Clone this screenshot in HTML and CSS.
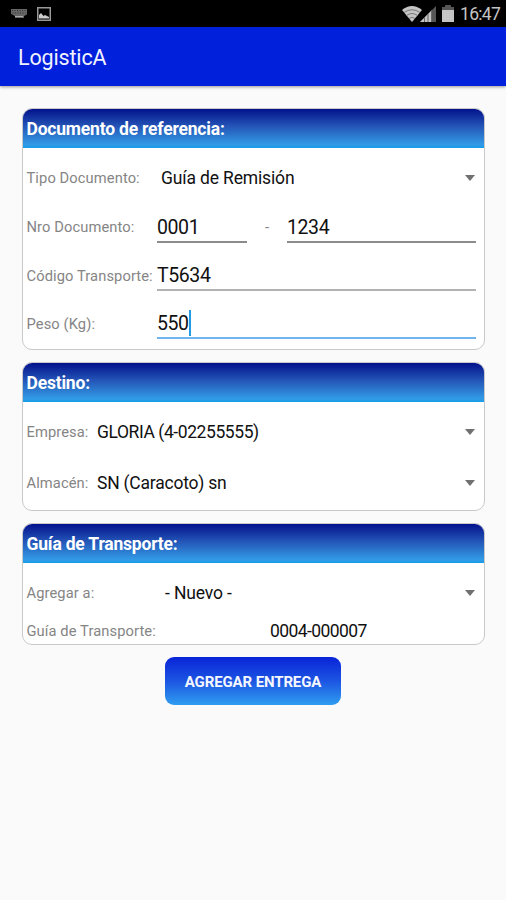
FILE: index.html
```html
<!DOCTYPE html>
<html lang="es">
<head>
<meta charset="utf-8">
<title>LogisticA</title>
<link rel="stylesheet" href="styles.css">
</head>
<body>
<div class="status">
  <svg class="i-keyboard" width="16" height="11" viewBox="0 0 16 11"><path d="M0 1h16v5.500l-3 1.500v2H4V8L0 6z" fill="#666"/><path d="M1 2.500h14M1.500 5h13" stroke="#333" stroke-width="1" stroke-dasharray="1 1.500"/><path d="M4 8.500h8" stroke="#aaa"/></svg>
  <svg class="i-image" width="14" height="14" viewBox="0 0 14 14"><path d="M.75.75h12.500v12.500H.75z" fill="none" stroke="#999" stroke-width="1.500"/><path d="M2 11.500V8l2-2 2.500 3L8 8l4 2v1.500z" fill="#ccc"/></svg>
  <span class="spacer"></span>
  <svg class="i-wifi" width="20" height="16" viewBox="0 0 20 16"><path d="M0 4Q10-4 20 4L10 16z" fill="#c4c4c4"/><path d="M2 6.500Q10 1 18 6.500M4.500 9.500Q10 5.500 15.500 9.500M7 12.500Q10 10 13 12.500" fill="none" stroke="#777"/></svg>
  <svg class="i-signal" width="16" height="16" viewBox="0 0 16 16"><path d="M0 16L16 0v16z" fill="#555"/><path d="M0 16L11 5v11z" fill="#c4c4c4"/><path d="M4.500 11v5M8 8v8M11.500 4v12" stroke="#666"/></svg>
  <svg class="i-battery" width="12" height="17" viewBox="0 0 12 17"><path d="M3 0h6v2h3v4H0V2h3z" fill="#555"/><path d="M0 5h12v12H0z" fill="#c4c4c4"/></svg>
  <span class="clock">16:47</span>
</div>
<header class="appbar">LogisticA</header>
<main>
  <section class="card reference">
    <h2>Documento de referencia:</h2>
    <div class="row type"><label>Tipo Documento:</label><span class="choice">Guía de Remisión</span><i class="arrow"></i></div>
    <div class="row number"><label>Nro Documento:</label><span class="field short">0001</span><span class="dash">-</span><span class="field">1234</span></div>
    <div class="row code"><label>Código Transporte:</label><span class="field light">T5634</span></div>
    <div class="row weight"><label>Peso (Kg):</label><span class="field active">550<i class="caret"></i></span></div>
  </section>
  <section class="card destination">
    <h2>Destino:</h2>
    <div class="row company"><label>Empresa:</label><span class="choice">GLORIA (4-02255555)</span><i class="arrow"></i></div>
    <div class="row store"><label>Almacén:</label><span class="choice">SN (Caracoto) sn</span><i class="arrow"></i></div>
  </section>
  <section class="card transport">
    <h2>Guía de Transporte:</h2>
    <div class="row add"><label>Agregar a:</label><span class="choice">- Nuevo -</span><i class="arrow"></i></div>
    <div class="row guide"><label>Guía de Transporte:</label><span class="choice">0004-000007</span></div>
  </section>
  <button class="submit">AGREGAR ENTREGA</button>
</main>
</body>
</html>
```
FILE: styles.css
```css
* { box-sizing: border-box; }
body { margin: 0; height: 900px; background: #fafafa; font-family: Roboto, "Liberation Sans", sans-serif; overflow: hidden; }
.status { display: flex; align-items: center; height: 27px; padding: 0 6px 0 11px; background: #000; }
.status svg { display: block; flex: none; }
.i-image { margin-left: 10px; }
.spacer { flex: 1; }
.i-wifi { margin-right: -2px; }
.i-signal { margin-right: 6px; }
.i-battery { margin-right: 6px; }
.clock { width: 40px; color: #c4c4c4; font-size: 17.500px; line-height: 28px; letter-spacing: -.7px; white-space: nowrap; }
.appbar { height: 59px; padding-left: 18px; background: #0120db; color: #f0f2ff; font-size: 21.500px; line-height: 61px; letter-spacing: -.15px; box-shadow: 0 1px 3px rgba(0,0,0,.4); }
main { display: flex; flex-direction: column; gap: 12px; padding: 22px 21px 0 22px; }
.card { border: 1px solid #c9c9c9; border-radius: 10px; background: #fff; overflow: hidden; }
.reference { height: 242px; }
.destination { height: 149px; }
.transport { height: 122px; }
h2 { margin: 0; height: 39px; padding-left: 3.500px; background: linear-gradient(#03128c, #2456b8 45%, #329be6 92%, #149ce8); color: #fff; font-size: 17.500px; font-weight: 700; line-height: 40px; letter-spacing: -.2px; }
.row { display: flex; align-items: center; padding: 0 8px 0 3px; }
label { flex: none; width: 131px; padding-left: .5px; color: #858585; font-size: 14.700px; letter-spacing: .1px; white-space: nowrap; }
.choice { flex: 1; color: #111; font-size: 17.500px; letter-spacing: -.15px; white-space: nowrap; }
.arrow { width: 10px; height: 6px; margin-right: 1px; background: #707070; clip-path: polygon(0 0, 100% 0, 50% 100%); }
.field { flex: 1; height: 32px; border-bottom: 2px solid #8b8b8b; color: #111; font-size: 19.500px; line-height: 34px; letter-spacing: -.4px; }
.light { border-color: #b2b2b2; }
.active { border-color: #72b5ec; }
.short { flex: none; width: 90px; }
.dash { width: 40px; text-align: center; color: #858585; font-size: 15px; }
.caret { display: inline-block; width: 2px; height: 26px; vertical-align: -6px; background: #239be5; }
.type { height: 60px; }
.type .choice { padding-left: 4px; }
.number { height: 38px; }
.code { height: 58px; }
.weight { height: 38px; }
.code label, .weight label { padding-top: 2px; }
.company { height: 60px; }
.store { height: 42px; }
.destination label { width: 71px; }
.company .choice { letter-spacing: -.42px; }
.store .choice { letter-spacing: -.22px; }
.add { height: 60px; }
.add .choice { padding-left: 8px; }
.guide { height: 16px; }
.guide .choice { padding-left: 113px; letter-spacing: -.58px; }
.submit { align-self: center; width: 176px; height: 48px; margin-right: 1px; padding: 2px 0 0; border: 0; border-radius: 9px; background: linear-gradient(#0924d8, #1c55e2 50%, #2f9df0); color: #f5f7ff; font: 700 15px/46px Roboto, "Liberation Sans", sans-serif; letter-spacing: -.12px; }
```
